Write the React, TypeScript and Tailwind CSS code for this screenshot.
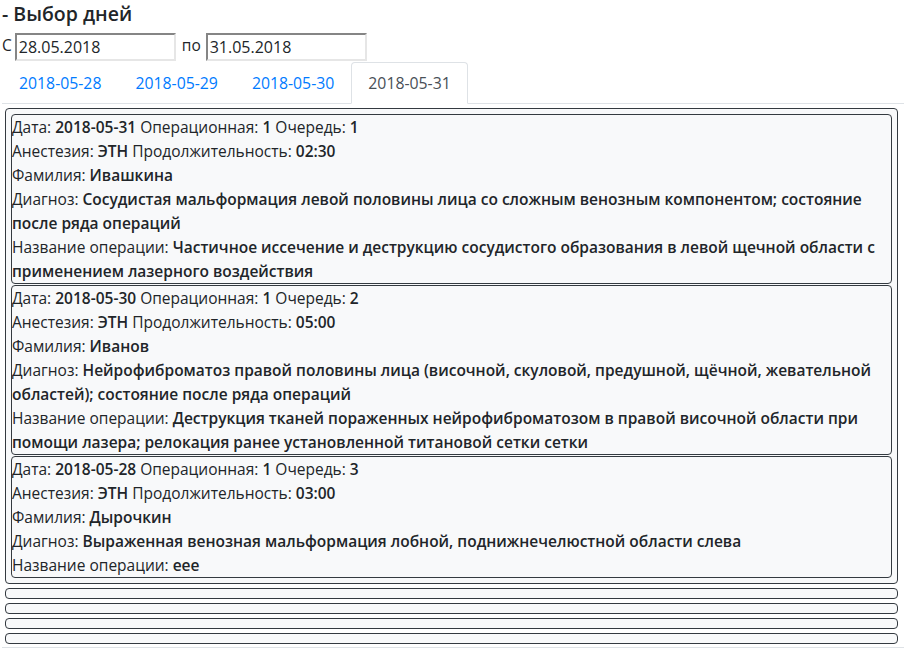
import React from "react";

type Op = {
  date: string;
  room: string;
  queue: string;
  anesthesia: string;
  duration: string;
  surname: string;
  diagnosis: string;
  operation: string;
};

const ops: Op[] = [
  {
    date: "2018-05-31",
    room: "1",
    queue: "1",
    anesthesia: "ЭТН",
    duration: "02:30",
    surname: "Ивашкина",
    diagnosis:
      "Сосудистая мальформация левой половины лица со сложным венозным компонентом; состояние после ряда операций",
    operation:
      "Частичное иссечение и деструкцию сосудистого образования в левой щечной области с применением лазерного воздействия",
  },
  {
    date: "2018-05-30",
    room: "1",
    queue: "2",
    anesthesia: "ЭТН",
    duration: "05:00",
    surname: "Иванов",
    diagnosis:
      "Нейрофиброматоз правой половины лица (височной, скуловой, предушной, щёчной, жевательной областей); состояние после ряда операций",
    operation:
      "Деструкция тканей пораженных нейрофиброматозом в правой височной области при помощи лазера; релокация ранее установленной титановой сетки сетки",
  },
  {
    date: "2018-05-28",
    room: "1",
    queue: "3",
    anesthesia: "ЭТН",
    duration: "03:00",
    surname: "Дырочкин",
    diagnosis: "Выраженная венозная мальформация лобной, поднижнечелюстной области слева",
    operation: "eee",
  },
];

const tabs = ["2018-05-28", "2018-05-29", "2018-05-30", "2018-05-31"];

function OpCard({ op }: { op: Op }) {
  return (
    <div className="m-px rounded border border-[#343a40] bg-[#f8f9fa] [&_b]:font-semibold">
      <div>
        Дата: <b>{op.date}</b> Операционная: <b>{op.room}</b> Очередь: <b>{op.queue}</b>
      </div>
      <div>
        Анестезия: <b>{op.anesthesia}</b> Продолжительность: <b>{op.duration}</b>
      </div>
      <div>
        Фамилия: <b>{op.surname}</b>
      </div>
      <div>
        Диагноз: <b>{op.diagnosis}</b>
      </div>
      <div>
        Название операции: <b>{op.operation}</b>
      </div>
    </div>
  );
}

export default function App() {
  return (
    <div className="min-h-screen bg-white px-[2px] font-['Open_Sans',sans-serif] text-[15.5px] leading-6 text-[#212529]">
      <h5 className="pt-[2px] text-[19.5px] font-semibold leading-6">- Выбор дней</h5>

      <div className="mt-[7px] flex h-[29px] items-start">
        <span className="mr-[3px]">С</span>
        <input
          readOnly
          value="28.05.2018"
          className="h-[28px] w-[161px] border-2 border-t-[#858585] border-l-[#858585] border-b-[#e6e6e6] border-r-[#e6e6e6] px-[2px] text-[16px] outline-none"
        />
        <span className="ml-[6px] mr-[5px]">по</span>
        <input
          readOnly
          value="31.05.2018"
          className="h-[28px] w-[161px] border-2 border-t-[#858585] border-l-[#858585] border-b-[#e6e6e6] border-r-[#e6e6e6] px-[2px] text-[16px] outline-none"
        />
      </div>

      <ul className="flex border-b border-[#dee2e6] text-[15.8px]">
        {tabs.map((t, i) => {
          const active = i === tabs.length - 1;
          return (
            <li key={t} className="-mb-px">
              <a
                className={
                  active
                    ? "block rounded-t border border-[#dee2e6] border-b-white bg-white px-4 py-2 text-[#495057]"
                    : "block rounded-t border border-transparent px-4 py-2 text-[#007bff]"
                }
              >
                {t}
              </a>
            </li>
          );
        })}
      </ul>

      <div className="border-b border-[#dee2e6] pb-[3px]">
        <div className="ml-[3px] mr-[6px] mt-[4px] flex flex-col gap-[4px]">
          <div className="rounded border border-[#343a40] bg-[#f8f9fa] p-1">
            {ops.map((op) => (
              <OpCard key={op.date} op={op} />
            ))}
          </div>
          {[0, 1, 2, 3].map((i) => (
            <div key={i} className="h-[11px] rounded border border-[#343a40] bg-[#f8f9fa]" />
          ))}
        </div>
      </div>
    </div>
  );
}
